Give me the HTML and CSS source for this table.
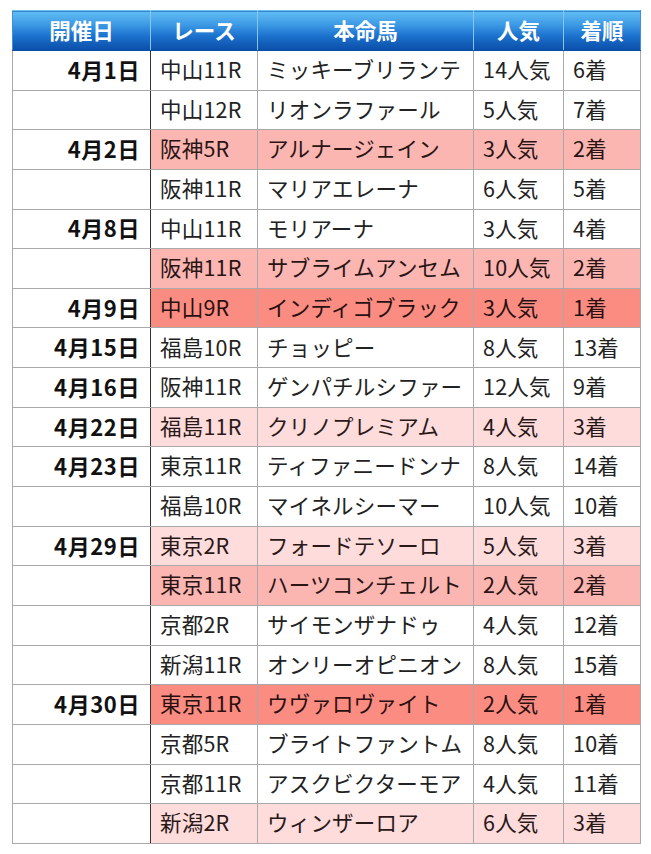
FILE: index.html
```html
<!DOCTYPE html>
<html lang="ja">
<head>
<meta charset="utf-8">
<link rel="stylesheet" href="styles.css">
</head>
<body>
<table class="results">
  <colgroup>
    <col class="c-date"><col class="c-race"><col class="c-horse"><col class="c-pop"><col class="c-rank">
  </colgroup>
  <thead>
    <tr><th>開催日</th><th>レース</th><th>本命馬</th><th>人気</th><th>着順</th></tr>
  </thead>
  <tbody>
    <tr><td class="date">4月1日</td><td>中山11R</td><td>ミッキーブリランテ</td><td>14人気</td><td>6着</td></tr>
    <tr><td class="date"></td><td>中山12R</td><td>リオンラファール</td><td>5人気</td><td>7着</td></tr>
    <tr class="second"><td class="date">4月2日</td><td>阪神5R</td><td>アルナージェイン</td><td>3人気</td><td>2着</td></tr>
    <tr><td class="date"></td><td>阪神11R</td><td>マリアエレーナ</td><td>6人気</td><td>5着</td></tr>
    <tr><td class="date">4月8日</td><td>中山11R</td><td>モリアーナ</td><td>3人気</td><td>4着</td></tr>
    <tr class="second"><td class="date"></td><td>阪神11R</td><td>サブライムアンセム</td><td>10人気</td><td>2着</td></tr>
    <tr class="first"><td class="date">4月9日</td><td>中山9R</td><td>インディゴブラック</td><td>3人気</td><td>1着</td></tr>
    <tr><td class="date">4月15日</td><td>福島10R</td><td>チョッピー</td><td>8人気</td><td>13着</td></tr>
    <tr><td class="date">4月16日</td><td>阪神11R</td><td>ゲンパチルシファー</td><td>12人気</td><td>9着</td></tr>
    <tr class="third"><td class="date">4月22日</td><td>福島11R</td><td>クリノプレミアム</td><td>4人気</td><td>3着</td></tr>
    <tr><td class="date">4月23日</td><td>東京11R</td><td>ティファニードンナ</td><td>8人気</td><td>14着</td></tr>
    <tr><td class="date"></td><td>福島10R</td><td>マイネルシーマー</td><td>10人気</td><td>10着</td></tr>
    <tr class="third"><td class="date">4月29日</td><td>東京2R</td><td>フォードテソーロ</td><td>5人気</td><td>3着</td></tr>
    <tr class="second"><td class="date"></td><td>東京11R</td><td>ハーツコンチェルト</td><td>2人気</td><td>2着</td></tr>
    <tr><td class="date"></td><td>京都2R</td><td>サイモンザナドゥ</td><td>4人気</td><td>12着</td></tr>
    <tr><td class="date"></td><td>新潟11R</td><td>オンリーオピニオン</td><td>8人気</td><td>15着</td></tr>
    <tr class="first"><td class="date">4月30日</td><td>東京11R</td><td>ウヴァロヴァイト</td><td>2人気</td><td>1着</td></tr>
    <tr><td class="date"></td><td>京都5R</td><td>ブライトファントム</td><td>8人気</td><td>10着</td></tr>
    <tr><td class="date"></td><td>京都11R</td><td>アスクビクターモア</td><td>4人気</td><td>11着</td></tr>
    <tr class="third"><td class="date"></td><td>新潟2R</td><td>ウィンザーロア</td><td>6人気</td><td>3着</td></tr>
  </tbody>
</table>
</body>
</html>
```
FILE: styles.css
```css
html, body {
  margin: 0;
  background: #ffffff;
}
body {
  padding: 10px 12px 0 12px;
  font-family: "Noto Sans CJK JP", "Noto Sans", sans-serif;
  color: #222222;
}
.results {
  border-collapse: collapse;
  table-layout: fixed;
  width: 628px;
  font-size: 21.5px;
}
.c-date { width: 138px; }
.c-race { width: 107px; }
.c-horse { width: 216px; }
.c-pop { width: 90px; }
.c-rank { width: 77px; }

.results th {
  height: 40px;
  box-sizing: border-box;
  padding: 0 0 2px 0;
  color: #ffffff;
  font-weight: bold;
  text-align: center;
  background: linear-gradient(to bottom, #62bdf3 0%, #3b98e4 35%, #1a6fcb 65%, #0b4ea8 100%);
  border-left: 1px solid #86c6f2;
  border-right: 1px solid #86c6f2;
  border-top: 1px solid #6cbff2;
  border-bottom: 1px solid #0b4ea8;
  line-height: 1;
}
.results th:first-child { border-left-color: #3f90d8; }
.results th:last-child { border-right-color: #3f90d8; }

.results td {
  height: 39.65px;
  box-sizing: border-box;
  padding: 0 0 3px 9px;
  border: 1px solid #a9a9a9;
  line-height: 1;
  white-space: nowrap;
  overflow: hidden;
  letter-spacing: 0.2px;
}
.results td.date {
  text-align: right;
  font-weight: bold;
  font-size: 22px;
  letter-spacing: 0.6px;
  padding: 0 10px 3px 0;
  color: #111111;
  border-right: 1px solid #333333;
}
.results tr.first td:not(.date) { background: #fb8c82; color: #2a1010; }
.results tr.second td:not(.date) { background: #fbb6b2; color: #2a1414; }
.results tr.third td:not(.date) { background: #fddcdb; color: #2a1818; }
```
